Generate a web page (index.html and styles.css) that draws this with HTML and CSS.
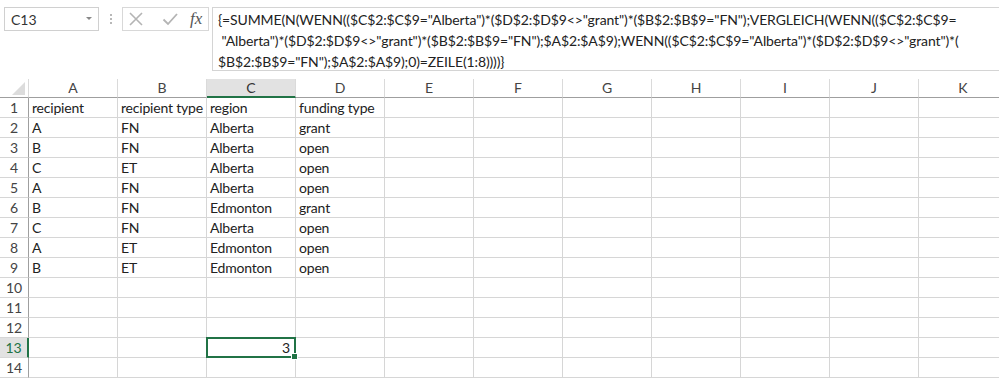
FILE: index.html
```html
<!DOCTYPE html>
<html>
  <head>
    <meta charset="UTF-8">
    <title>Excel</title>
    <link rel="stylesheet" href="styles.css">
  </head>
  <body>
    <div class="topbar">
      <div class="namebox">
        <span class="cellref">C13</span>
        <span class="drop"></span>
      </div>
      <div class="dots"><i></i><i></i><i></i></div>
      <div class="fxbox">
        <svg class="ico" width="16" height="16" viewBox="0 0 16 16">
          <path d="M2 2 L14 14 M14 2 L2 14" stroke="#b4b4b4" stroke-width="1.6" fill="none"/>
        </svg>
        <svg class="ico" width="16" height="16" viewBox="0 0 16 16">
          <path d="M1.5 8.5 L6 13 L15 3" stroke="#b4b4b4" stroke-width="1.8" fill="none"/>
        </svg>
        <span class="fx">fx</span>
      </div>
      <div class="formula">
        <div class="fline">{=SUMME(N(WENN(($C$2:$C$9="Alberta")*($D$2:$D$9&lt;&gt;"grant")*($B$2:$B$9="FN");VERGLEICH(WENN(($C$2:$C$9=</div>
        <div class="fline">&nbsp;"Alberta")*($D$2:$D$9&lt;&gt;"grant")*($B$2:$B$9="FN");$A$2:$A$9);WENN(($C$2:$C$9="Alberta")*($D$2:$D$9&lt;&gt;"grant")*(</div>
        <div class="fline">$B$2:$B$9="FN");$A$2:$A$9);0)=ZEILE(1:8))))}</div>
      </div>
    </div>

    <div class="sheet">
      <div class="corner"><span class="tri"></span></div>
      <div class="colhead">A</div>
      <div class="colhead">B</div>
      <div class="colhead sel">C</div>
      <div class="colhead">D</div>
      <div class="colhead">E</div>
      <div class="colhead">F</div>
      <div class="colhead">G</div>
      <div class="colhead">H</div>
      <div class="colhead">I</div>
      <div class="colhead">J</div>
      <div class="colhead">K</div>
    </div>
    <div class="sheet" id="rows"></div>

    <script>
      let data = [
        ["recipient", "recipient type", "region", "funding type"],
        ["A", "FN", "Alberta", "grant"],
        ["B", "FN", "Alberta", "open"],
        ["C", "ET", "Alberta", "open"],
        ["A", "FN", "Alberta", "open"],
        ["B", "FN", "Edmonton", "grant"],
        ["C", "FN", "Alberta", "open"],
        ["A", "ET", "Edmonton", "open"],
        ["B", "ET", "Edmonton", "open"]
      ];
      let rows = document.getElementById("rows");
      let html = "";
      for (let r = 1; r <= 14; r++) {
        html += '<div class="rowhead' + (r == 13 ? ' sel' : '') + '">' + r + '</div>';
        for (let c = 0; c < 11; c++) {
          let val = (data[r - 1] && data[r - 1][c]) || "";
          if (r == 13 && c == 2) {
            html += '<div class="cell num active">3<span class="handle"></span></div>';
          } else {
            html += '<div class="cell">' + val + '</div>';
          }
        }
      }
      rows.innerHTML = html;
    </script>
  </body>
</html>
```

FILE: styles.css
```css
body {
  margin: 0;
  background: #fff;
  font-family: Lato, "Open Sans", sans-serif;
  color: #222;
  overflow: hidden;
  width: 999px;
  height: 380px;
}

/* formula bar */
.topbar {
  display: flex;
  align-items: flex-start;
  padding-top: 7px;
  height: 79px;
  box-sizing: border-box;
}
.namebox {
  margin-left: 4px;
  width: 95px;
  height: 24px;
  box-sizing: border-box;
  border: 1px solid #d0d0d0;
  display: flex;
  align-items: center;
  justify-content: space-between;
  padding: 0 6px 0 6px;
  font-size: 14px;
  color: #333;
}
.drop {
  width: 0;
  height: 0;
  border-left: 3px solid transparent;
  border-right: 3px solid transparent;
  border-top: 3px solid #888;
  margin-bottom: 2px;
}
.dots {
  width: 23px;
  height: 24px;
  display: flex;
  flex-direction: column;
  align-items: center;
  justify-content: center;
  gap: 2px;
}
.dots i {
  width: 2px;
  height: 2px;
  background: #b8b8b8;
}
.fxbox {
  width: 87px;
  height: 24px;
  box-sizing: border-box;
  border: 1px solid #d8d8d8;
  display: flex;
  align-items: center;
  gap: 18px;
  padding-left: 5px;
}
.fx {
  font-family: "Liberation Serif", serif;
  font-style: italic;
  font-size: 17px;
  color: #555;
  margin-left: -6px;
}
.formula {
  margin-left: 3px;
  flex: 1;
  height: 64px;
  box-sizing: border-box;
  border: 1px solid #d4d4d4;
  border-right: none;
  padding: 1px 0 0 5px;
  font-size: 14px;
  line-height: 21px;
  letter-spacing: -0.12px;
  color: #222;
  white-space: nowrap;
  overflow: hidden;
}

/* grid */
.sheet {
  display: grid;
  grid-template-columns: 29px repeat(11, 89px);
  font-size: 14px;
  letter-spacing: -0.2px;
}
.corner,
.colhead {
  height: 19px;
  box-sizing: border-box;
  border-bottom: 1px solid #9f9f9f;
  border-right: 1px solid #dadada;
  text-align: center;
  line-height: 18px;
  color: #444;
  font-size: 14px;
  letter-spacing: 0;
}
.corner {
  position: relative;
}
.tri {
  position: absolute;
  right: 3px;
  bottom: 2px;
  width: 0;
  height: 0;
  border-left: 13px solid transparent;
  border-bottom: 13px solid #dcdcdc;
}
.colhead.sel {
  background: #e2e2e2;
  border-bottom: 2px solid #217346;
  color: #333;
}
.rowhead {
  height: 20px;
  box-sizing: border-box;
  border-bottom: 1px solid #d6d6d6;
  border-right: 1px solid #9f9f9f;
  text-align: center;
  line-height: 20px;
  color: #444;
  font-size: 14px;
  letter-spacing: 0;
}
.rowhead.sel {
  background: #e2e2e2;
  color: #217346;
  border-right: 2px solid #217346;
}
.cell {
  height: 20px;
  box-sizing: border-box;
  border-bottom: 1px solid #d6d6d6;
  border-right: 1px solid #d6d6d6;
  padding-left: 3px;
  line-height: 20px;
  white-space: nowrap;
  overflow: hidden;
}
.cell.num {
  text-align: right;
  padding-right: 4px;
}
.cell.active {
  position: relative;
  overflow: visible;
  border: 2px solid #217346;
  margin: -1px 0 0 -1px;
  height: 21px;
  width: 90px;
  line-height: 17px;
}
.handle {
  position: absolute;
  right: -4px;
  bottom: -4px;
  width: 5px;
  height: 5px;
  background: #217346;
  border: 1px solid #fff;
}
```
